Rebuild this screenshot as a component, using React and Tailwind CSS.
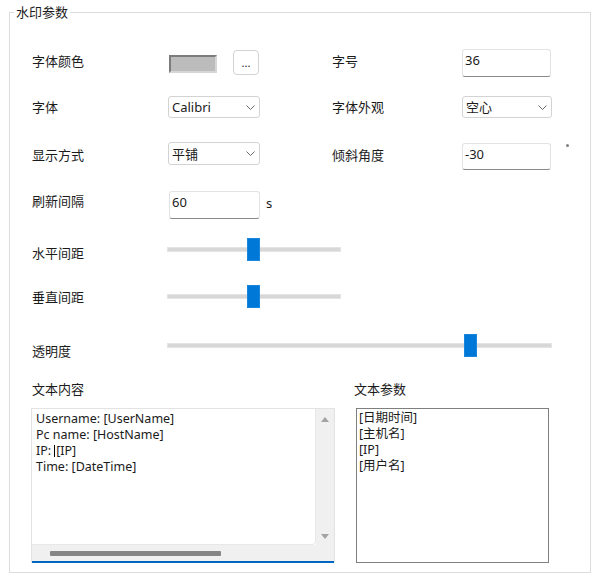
import React from 'react';

const Chevron = () => (
  <svg width="9" height="5" viewBox="0 0 9 5" className="shrink-0">
    <path d="M0.5 0.5 L4.5 4.5 L8.5 0.5" fill="none" stroke="#6a6a6a" strokeWidth="1" />
  </svg>
);

const Combo = ({ value, className }) => (
  <div className={`flex items-center justify-between bg-white border border-[#d3d3d3] rounded-[3px] pl-[3px] pr-[4px] ${className}`}>
    <span className="leading-[16px]">{value}</span>
    <Chevron />
  </div>
);

const TextBox = ({ value, className }) => (
  <div className={`bg-white border border-[#e3e3e3] border-b-[#8a8a8a] rounded-[3px] pl-[2px] pt-[2px] leading-[16px] ${className}`}>
    {value}
  </div>
);

const Slider = ({ width, thumb }) => (
  <div className={`relative flex items-center h-[23px] ${width}`}>
    <div className="w-full h-[5px] bg-[#d8d8d8] border border-[#e4e4e4]" />
    <div className={`absolute top-0 w-[13px] h-[23px] bg-[#0078d7] border border-[#1a86dc] ${thumb}`} />
  </div>
);

const App = () => {
  return (
    <div className="w-[600px] h-[581px] bg-white pt-[4px] pl-[9px] font-['Noto_Sans','Noto_Sans_CJK_SC',sans-serif] text-[13px] text-[#1b1b1b]">
      <fieldset className="w-[582px] h-[569px] border border-[#dcdcdc]">
        <legend className="ml-[4px] px-[2px] leading-[17px]">水印参数</legend>

        <div className="pl-[22px]">
          {/* 字体颜色 / 字号 */}
          <div className="flex h-[28px] mt-[28px]">
            <div className="flex items-start w-[300px]">
              <span className="w-[137px] mt-[4px] leading-[16px]">字体颜色</span>
              <div className="mt-[6px] w-[48px] h-[18px] bg-[#bcbcbc] border-2 border-t-[#7c7c7c] border-l-[#7c7c7c] border-b-[#d6d6d6] border-r-[#d6d6d6]" />
              <button className="ml-[16px] mt-[1px] w-[26px] h-[25px] flex items-center justify-center bg-white border border-[#d3d3d3] rounded-[4px] text-[11px] leading-[13px]">
                ...
              </button>
            </div>
            <div className="flex items-start">
              <span className="w-[130px] mt-[4px] leading-[16px]">字号</span>
              <TextBox value="36" className="w-[89px] h-[28px]" />
            </div>
          </div>

          {/* 字体 / 字体外观 */}
          <div className="flex h-[22px] mt-[19px]">
            <div className="flex items-center w-[300px]">
              <span className="w-[136px] leading-[16px]">字体</span>
              <Combo value="Calibri" className="w-[92px] h-[22px]" />
            </div>
            <div className="flex items-center">
              <span className="w-[130px] leading-[16px]">字体外观</span>
              <Combo value="空心" className="w-[90px] h-[22px]" />
            </div>
          </div>

          {/* 显示方式 / 倾斜角度 */}
          <div className="flex h-[28px] mt-[24px]">
            <div className="flex items-start w-[300px]">
              <span className="w-[136px] mt-[5px] leading-[16px]">显示方式</span>
              <Combo value="平铺" className="w-[92px] h-[23px]" />
            </div>
            <div className="flex items-start">
              <span className="w-[130px] mt-[5px] leading-[16px]">倾斜角度</span>
              <TextBox value="-30" className="w-[89px] h-[27px] mt-[1px]" />
              <span className="ml-[15px] mt-[2px] w-[3px] h-[3px] rounded-full bg-[#808080]" />
            </div>
          </div>

          {/* 刷新间隔 */}
          <div className="flex items-start h-[28px] mt-[21px]">
            <span className="w-[137px] mt-[2px] leading-[16px]">刷新间隔</span>
            <TextBox value="60" className="w-[91px] h-[28px]" />
            <span className="ml-[6px] mt-[4px] leading-[16px]">s</span>
          </div>

          {/* 水平间距 */}
          <div className="flex items-start h-[23px] mt-[19px]">
            <span className="w-[135px] mt-[7px] leading-[16px]">水平间距</span>
            <Slider width="w-[174px]" thumb="left-[80px]" />
          </div>

          {/* 垂直间距 */}
          <div className="flex items-start h-[23px] mt-[24px]">
            <span className="w-[135px] mt-[4px] leading-[16px]">垂直间距</span>
            <Slider width="w-[174px]" thumb="left-[80px]" />
          </div>

          {/* 透明度 */}
          <div className="flex items-start h-[24px] mt-[26px]">
            <span className="w-[135px] mt-[9px] leading-[16px]">透明度</span>
            <Slider width="w-[385px]" thumb="left-[297px]" />
          </div>

          {/* 文本内容 / 文本参数 */}
          <div className="flex h-[16px] mt-[23px] leading-[16px]">
            <span className="w-[322px]">文本内容</span>
            <span>文本参数</span>
          </div>

          <div className="flex mt-[11px] -ml-[1px]">
            {/* textarea */}
            <div className="w-[304px] h-[155px] flex flex-col border border-b-0 border-[#e3e3e3]">
              <div className="flex flex-1 min-h-0">
                <div className="flex-1 bg-white pl-[4px] pt-[2px] text-[12.5px] leading-[16px] border-r border-b border-[#e8e8e8] rounded-br-[4px]">
                  <div>Username: [UserName]</div>
                  <div>Pc name: [HostName]</div>
                  <div>
                    IP:<span className="inline-block w-[1px] h-[12px] bg-black align-[-2px] ml-[3px] mr-[1px]" />[IP]
                  </div>
                  <div>Time: [DateTime]</div>
                </div>
                <div className="w-[18px] bg-[#f0f0f0] flex flex-col items-center justify-between pt-[8px] pb-[6px]">
                  <svg width="8" height="5" viewBox="0 0 8 5">
                    <path d="M4 0 L8 5 L0 5 Z" fill="#a3a3a3" />
                  </svg>
                  <svg width="8" height="5" viewBox="0 0 8 5">
                    <path d="M0 0 L8 0 L4 5 Z" fill="#a3a3a3" />
                  </svg>
                </div>
              </div>
              <div className="h-[16px] bg-[#f0f0f0] flex items-center">
                <div className="ml-[18px] w-[171px] h-[5px] bg-[#858585] rounded-[1px]" />
              </div>
              <div className="h-[2px] bg-[#0067c0]" />
            </div>

            {/* listbox */}
            <div className="ml-[21px] w-[193px] h-[155px] bg-white border border-[#7f7f7f] pl-[2px] pt-[1px] text-[12.5px] leading-[16px]">
              <div>[日期时间]</div>
              <div>[主机名]</div>
              <div>[IP]</div>
              <div>[用户名]</div>
            </div>
          </div>
        </div>
      </fieldset>
    </div>
  );
};

export default App;
